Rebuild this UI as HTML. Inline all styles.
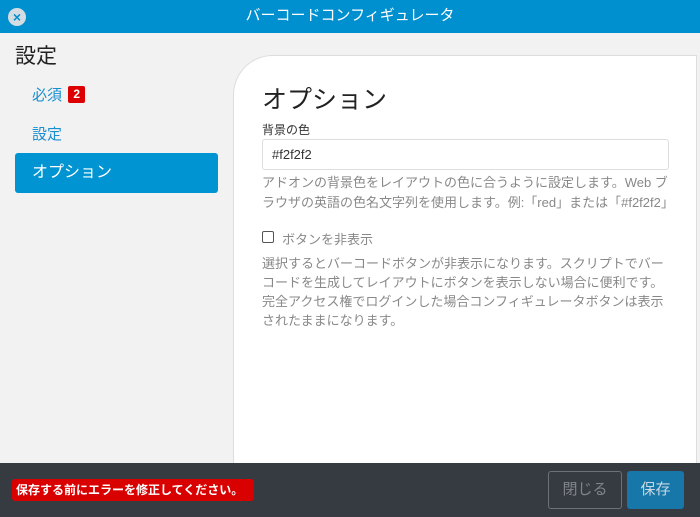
<!DOCTYPE html>
<html><head><meta charset="utf-8"><style>
*{margin:0;padding:0;box-sizing:border-box}
body{width:700px;height:517px;overflow:hidden;background:#f2f2f2;font-family:"Liberation Sans","Noto Sans CJK JP",sans-serif;position:relative}
.hdr{position:absolute;left:0;top:0;width:700px;height:33px;background:#0090cf;color:#fff;font-size:15px;text-align:center;line-height:31px}
.x{position:absolute;left:8px;top:8px;width:18px;height:18px;border-radius:50%;background:#d5dde3;color:#0090cf;font-size:14px;line-height:18px;text-align:center;font-weight:bold}
.t{position:absolute;left:15px;top:40px;font-size:21px;color:#222}
.nav{position:absolute;left:32px;font-size:15px;color:#1a8fd0}
.badge{display:inline-block;background:#d00;color:#fff;font-size:12px;font-weight:bold;width:17px;height:17px;border-radius:2px;text-align:center;line-height:17px;vertical-align:2px;margin-left:2px}
.act{position:absolute;left:15px;top:153px;width:203px;height:40px;background:#0094d2;border-radius:3px;color:#fff;font-size:16px;line-height:39px;padding-left:17px}
.panel{position:absolute;left:233px;top:55px;width:464px;height:420px;background:#fff;border:1px solid #ddd;border-top-left-radius:40px}
.h{position:absolute;left:262px;top:80px;font-size:25px;color:#222}
.lab{position:absolute;left:262px;top:121px;font-size:12px;color:#333}
.inp{position:absolute;left:262px;top:139px;width:407px;height:31px;border:1px solid #ddd;border-radius:3px;font-size:13px;color:#333;padding-left:9px;line-height:29px}
.d{position:absolute;left:262px;font-size:13px;color:#888;line-height:20px}
.cb{position:absolute;left:262px;top:231px;width:12px;height:12px;border:1px solid #555;border-radius:2px}
.cbl{position:absolute;left:282px;top:229px;font-size:13px;color:#888}
.ft{position:absolute;left:0;top:463px;width:700px;height:54px;background:#363a41}
.err{position:absolute;left:12px;top:479px;width:242px;height:22px;background:#d90000;border-radius:3px;color:#fff;font-size:12px;font-weight:bold;line-height:22px;padding-left:4px}
.b1{position:absolute;left:548px;top:471px;width:74px;height:38px;border:1px solid #6c7077;border-radius:3px;color:#80858b;font-size:15px;text-align:center;line-height:36px}
.b2{position:absolute;left:627px;top:471px;width:57px;height:38px;background:#1677a8;border-radius:3px;color:#c8d8e4;font-size:15px;text-align:center;line-height:38px}
</style></head><body>
<div class="hdr">バーコードコンフィギュレータ</div>
<div class="x">×</div>
<div class="t">設定</div>
<div class="nav" style="top:84px">必須 <span class="badge">2</span></div>
<div class="nav" style="top:123px">設定</div>
<div class="act">オプション</div>
<div class="panel"></div>
<div class="h">オプション</div>
<div class="lab">背景の色</div>
<div class="inp">#f2f2f2</div>
<div class="d" style="top:173px;width:410px">アドオンの背景色をレイアウトの色に合うように設定します。Web ブ<br>ラウザの英語の色名文字列を使用します。例:「red」または「#f2f2f2」</div>
<div class="cb"></div>
<div class="cbl">ボタンを非表示</div>
<div class="d" style="top:254px;line-height:19px;width:420px">選択するとバーコードボタンが非表示になります。スクリプトでバー<br>コードを生成してレイアウトにボタンを表示しない場合に便利です。<br>完全アクセス権でログインした場合コンフィギュレータボタンは表示<br>されたままになります。</div>
<div class="ft"></div>
<div class="err">保存する前にエラーを修正してください。</div>
<div class="b1">閉じる</div>
<div class="b2">保存</div>
</body></html>
